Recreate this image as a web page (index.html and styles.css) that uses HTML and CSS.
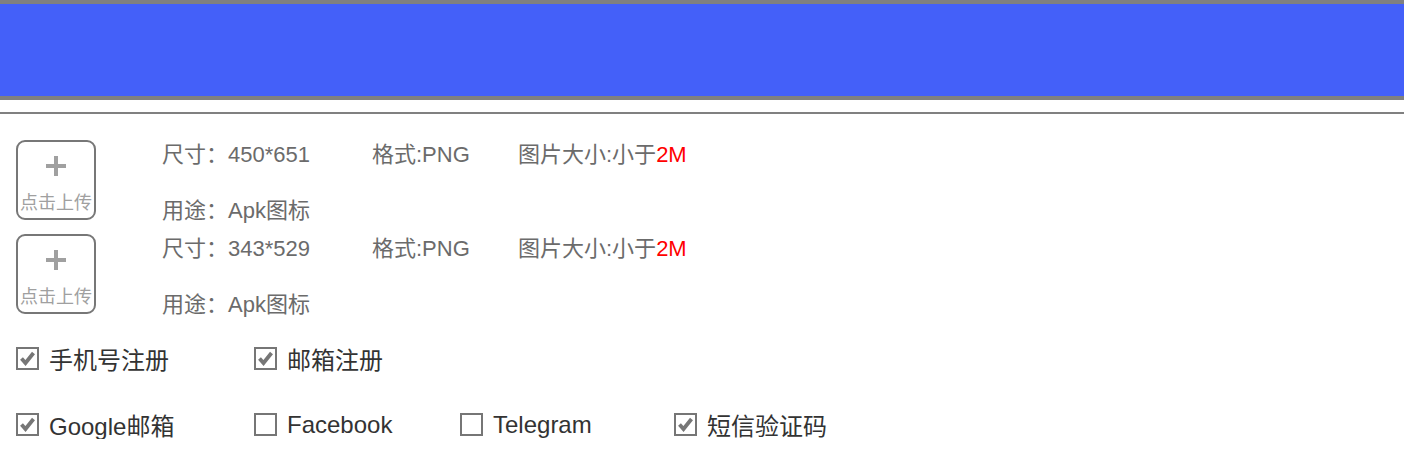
FILE: index.html
```html
<!DOCTYPE html>
<html lang="zh-CN">
<head>
<meta charset="utf-8">
<title>上传</title>
<link rel="stylesheet" href="styles.css">
</head>
<body>
<header class="banner"></header>
<hr class="divider">
<section class="uploads">
  <div class="upload-row">
    <div class="upload-box">
      <span class="plus"></span>
      <span class="upload-text">点击上传</span>
    </div>
    <div class="info">
      <div class="info-line">
        <span class="spec spec-size">尺寸：450*651</span>
        <span class="spec spec-format">格式:PNG</span>
        <span class="spec">图片大小:小于<em class="red">2M</em></span>
      </div>
      <div class="info-line info-use">用途：Apk图标</div>
    </div>
  </div>
  <div class="upload-row">
    <div class="upload-box">
      <span class="plus"></span>
      <span class="upload-text">点击上传</span>
    </div>
    <div class="info">
      <div class="info-line">
        <span class="spec spec-size">尺寸：343*529</span>
        <span class="spec spec-format">格式:PNG</span>
        <span class="spec">图片大小:小于<em class="red">2M</em></span>
      </div>
      <div class="info-line info-use">用途：Apk图标</div>
    </div>
  </div>
</section>
<section class="options">
  <div class="opt-row">
    <label class="opt"><span class="box"><svg viewBox="0 0 19 19" width="19" height="19"><path d="M3.5 9.5 L7.5 14 L15.5 4" fill="none" stroke="#767676" stroke-width="3.8"/></svg></span>手机号注册</label>
    <label class="opt"><span class="box"><svg viewBox="0 0 19 19" width="19" height="19"><path d="M3.5 9.5 L7.5 14 L15.5 4" fill="none" stroke="#767676" stroke-width="3.8"/></svg></span>邮箱注册</label>
  </div>
  <div class="opt-row">
    <label class="opt"><span class="box"><svg viewBox="0 0 19 19" width="19" height="19"><path d="M3.5 9.5 L7.5 14 L15.5 4" fill="none" stroke="#767676" stroke-width="3.8"/></svg></span>Google邮箱</label>
    <label class="opt"><span class="box"></span>Facebook</label>
    <label class="opt"><span class="box"></span>Telegram</label>
    <label class="opt"><span class="box"><svg viewBox="0 0 19 19" width="19" height="19"><path d="M3.5 9.5 L7.5 14 L15.5 4" fill="none" stroke="#767676" stroke-width="3.8"/></svg></span>短信验证码</label>
  </div>
</section>
</body>
</html>
```
FILE: styles.css
```css
html, body {
  margin: 0;
  padding: 0;
  background: #fff;
  font-family: "Liberation Sans", "Noto Sans CJK SC", sans-serif;
}

.banner {
  height: 92px;
  background: #4460f9;
  border-top: 4px solid #808080;
  border-bottom: 4px solid #808080;
}

.divider {
  margin: 12px 0 0 0;
  border: 0;
  height: 2px;
  background: #808080;
}

.uploads {
  padding: 26px 0 0 16px;
  display: flex;
  flex-direction: column;
  gap: 8px;
}

.upload-row {
  display: flex;
  align-items: flex-start;
}

.upload-box {
  width: 80px;
  height: 80px;
  box-sizing: border-box;
  border: 2px solid #777;
  border-radius: 9px;
  display: flex;
  flex-direction: column;
  align-items: center;
}

.plus {
  position: relative;
  width: 20px;
  height: 20px;
  margin-top: 14px;
}
.plus::before, .plus::after {
  content: "";
  position: absolute;
  background: #a0a0a0;
}
.plus::before {
  left: 0; right: 0; top: 8px; height: 4px;
}
.plus::after {
  top: 0; bottom: 0; left: 8px; width: 4px;
}

.upload-text {
  margin-top: 16px;
  font-size: 18px;
  line-height: 22px;
  color: #a0a0a0;
  white-space: nowrap;
}

.info {
  margin-left: 66px;
  color: #6b6b6b;
  font-size: 22px;
}

.info-line {
  display: flex;
  line-height: 30px;
  white-space: nowrap;
}

.info-use {
  margin-top: 26px;
}

.spec-size { width: 210px; }
.spec-format { width: 146px; }

.red {
  color: #f00;
  font-style: normal;
}

.options {
  padding: 21px 0 0 16px;
}

.opt-row {
  display: grid;
  grid-template-columns: 238px 206px 214px auto;
  align-items: center;
  height: 32px;
}
.opt-row + .opt-row {
  margin-top: 34px;
}

.opt {
  display: flex;
  align-items: center;
  font-size: 24px;
  color: #333;
  white-space: nowrap;
}

.box {
  width: 23px;
  height: 23px;
  box-sizing: border-box;
  border: 2px solid #767676;
  background: #fff;
  margin-right: 10px;
  display: flex;
  align-items: center;
  justify-content: center;
}
.box svg {
  display: block;
}
```
